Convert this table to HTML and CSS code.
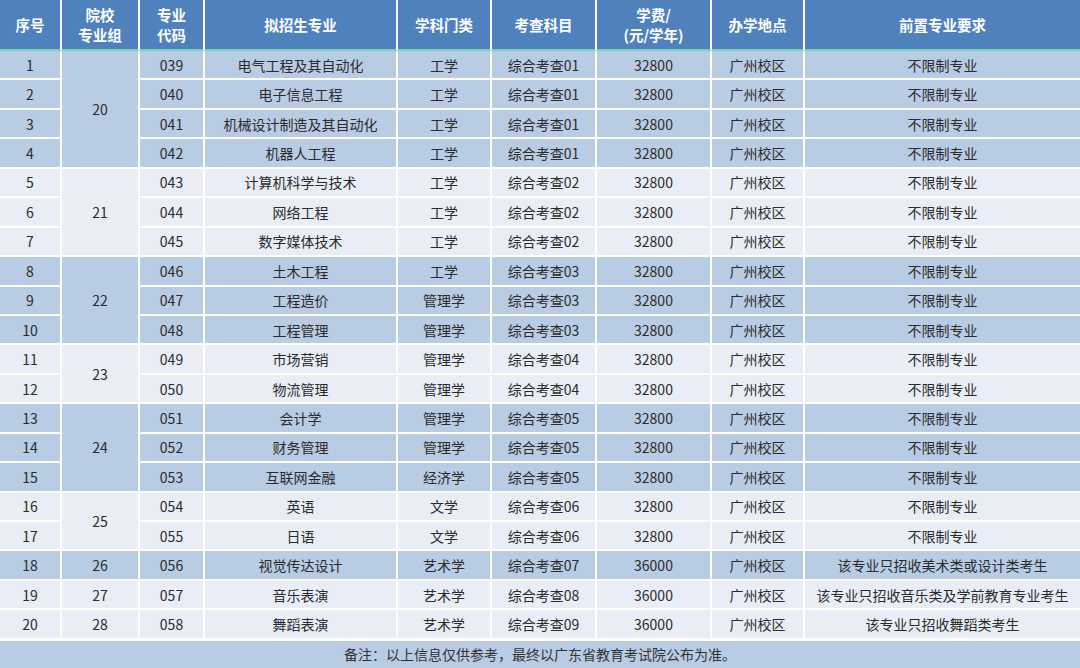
FILE: index.html
```html
<!DOCTYPE html>
<html lang="zh-CN">
<head>
<meta charset="utf-8">
<link rel="stylesheet" href="styles.css">
</head>
<body>
<div class="page">
<table class="tbl">
<colgroup>
<col style="width:62px"><col style="width:78px"><col style="width:65px"><col style="width:193px"><col style="width:94px"><col style="width:105px"><col style="width:115px"><col style="width:93px"><col style="width:275px">
</colgroup>
<thead>
<tr class="hd">
<th>序号</th><th>院校<br>专业组</th><th>专业<br>代码</th><th>拟招生专业</th><th>学科门类</th><th>考查科目</th><th>学费/<br>(元/学年)</th><th>办学地点</th><th class="last">前置专业要求</th>
</tr>
</thead>
<tbody>
<tr class="d"><td>1</td><td rowspan="4">20</td><td>039</td><td>电气工程及其自动化</td><td>工学</td><td>综合考查01</td><td>32800</td><td>广州校区</td><td class="last">不限制专业</td></tr>
<tr class="d"><td>2</td><td>040</td><td>电子信息工程</td><td>工学</td><td>综合考查01</td><td>32800</td><td>广州校区</td><td class="last">不限制专业</td></tr>
<tr class="d"><td>3</td><td>041</td><td>机械设计制造及其自动化</td><td>工学</td><td>综合考查01</td><td>32800</td><td>广州校区</td><td class="last">不限制专业</td></tr>
<tr class="d"><td>4</td><td>042</td><td>机器人工程</td><td>工学</td><td>综合考查01</td><td>32800</td><td>广州校区</td><td class="last">不限制专业</td></tr>
<tr class="l"><td>5</td><td rowspan="3">21</td><td>043</td><td>计算机科学与技术</td><td>工学</td><td>综合考查02</td><td>32800</td><td>广州校区</td><td class="last">不限制专业</td></tr>
<tr class="l"><td>6</td><td>044</td><td>网络工程</td><td>工学</td><td>综合考查02</td><td>32800</td><td>广州校区</td><td class="last">不限制专业</td></tr>
<tr class="l"><td>7</td><td>045</td><td>数字媒体技术</td><td>工学</td><td>综合考查02</td><td>32800</td><td>广州校区</td><td class="last">不限制专业</td></tr>
<tr class="d"><td>8</td><td rowspan="3">22</td><td>046</td><td>土木工程</td><td>工学</td><td>综合考查03</td><td>32800</td><td>广州校区</td><td class="last">不限制专业</td></tr>
<tr class="d"><td>9</td><td>047</td><td>工程造价</td><td>管理学</td><td>综合考查03</td><td>32800</td><td>广州校区</td><td class="last">不限制专业</td></tr>
<tr class="d"><td>10</td><td>048</td><td>工程管理</td><td>管理学</td><td>综合考查03</td><td>32800</td><td>广州校区</td><td class="last">不限制专业</td></tr>
<tr class="l"><td>11</td><td rowspan="2">23</td><td>049</td><td>市场营销</td><td>管理学</td><td>综合考查04</td><td>32800</td><td>广州校区</td><td class="last">不限制专业</td></tr>
<tr class="l"><td>12</td><td>050</td><td>物流管理</td><td>管理学</td><td>综合考查04</td><td>32800</td><td>广州校区</td><td class="last">不限制专业</td></tr>
<tr class="d"><td>13</td><td rowspan="3">24</td><td>051</td><td>会计学</td><td>管理学</td><td>综合考查05</td><td>32800</td><td>广州校区</td><td class="last">不限制专业</td></tr>
<tr class="d"><td>14</td><td>052</td><td>财务管理</td><td>管理学</td><td>综合考查05</td><td>32800</td><td>广州校区</td><td class="last">不限制专业</td></tr>
<tr class="d"><td>15</td><td>053</td><td>互联网金融</td><td>经济学</td><td>综合考查05</td><td>32800</td><td>广州校区</td><td class="last">不限制专业</td></tr>
<tr class="l"><td>16</td><td rowspan="2">25</td><td>054</td><td>英语</td><td>文学</td><td>综合考查06</td><td>32800</td><td>广州校区</td><td class="last">不限制专业</td></tr>
<tr class="l"><td>17</td><td>055</td><td>日语</td><td>文学</td><td>综合考查06</td><td>32800</td><td>广州校区</td><td class="last">不限制专业</td></tr>
<tr class="d"><td>18</td><td>26</td><td>056</td><td>视觉传达设计</td><td>艺术学</td><td>综合考查07</td><td>36000</td><td>广州校区</td><td class="last">该专业只招收美术类或设计类考生</td></tr>
<tr class="l"><td>19</td><td>27</td><td>057</td><td>音乐表演</td><td>艺术学</td><td>综合考查08</td><td>36000</td><td>广州校区</td><td class="last">该专业只招收音乐类及学前教育专业考生</td></tr>
<tr class="l"><td>20</td><td>28</td><td>058</td><td>舞蹈表演</td><td>艺术学</td><td>综合考查09</td><td>36000</td><td>广州校区</td><td class="last">该专业只招收舞蹈类考生</td></tr>
</tbody>
</table>
<div class="note">备注：以上信息仅供参考，最终以广东省教育考试院公布为准。</div>
</div>
</body>
</html>
```

FILE: styles.css
```css
html, body {
  margin: 0;
  padding: 0;
  background: #ffffff;
}
body {
  font-family: "Noto Sans CJK SC", "Noto Sans", sans-serif;
  color: #2b2b2b;
}
.page {
  width: 1080px;
  height: 668px;
  overflow: hidden;
  display: flex;
  flex-direction: column;
}
.tbl {
  width: 1080px;
  table-layout: fixed;
  border-collapse: separate;
  border-spacing: 0;
}
.tbl th, .tbl td {
  box-sizing: border-box;
  padding: 0;
  text-align: center;
  vertical-align: middle;
  border-right: 2px solid #ffffff;
  white-space: nowrap;
}
.tbl .last {
  border-right: none;
}
.hd th {
  height: 51px;
  background: #4f81bd;
  color: #ffffff;
  font-weight: bold;
  font-size: 14.5px;
  line-height: 20px;
  border-bottom: 2px solid #7ccfc3;
}
.tbl tbody tr {
  height: 29.45px;
}
.tbl tbody td {
  font-size: 14px;
  line-height: 18px;
  border-bottom: 2px solid #ffffff;
}
.tbl tr.d td {
  background: #b8cce4;
}
.tbl tr.l td {
  background: #e9eef6;
}
.note {
  flex: 1;
  background: #b8cce4;
  border-top: 1px solid #ffffff;
  text-align: center;
  font-size: 14px;
  line-height: 26px;
  color: #333333;
}
```
